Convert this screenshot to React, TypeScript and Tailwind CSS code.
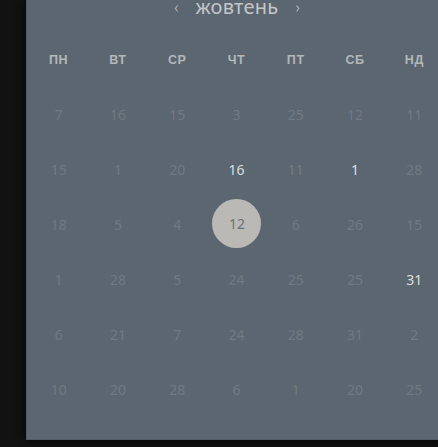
import React from "react";

const days = ["ПН", "ВТ", "СР", "ЧТ", "ПТ", "СБ", "НД"];

type Cell = { n: number; s?: "b" | "sel" };

const rows: Cell[][] = [
  [{ n: 7 }, { n: 16 }, { n: 15 }, { n: 3 }, { n: 25 }, { n: 12 }, { n: 11 }],
  [{ n: 15 }, { n: 1 }, { n: 20 }, { n: 16, s: "b" }, { n: 11 }, { n: 1, s: "b" }, { n: 28 }],
  [{ n: 18 }, { n: 5 }, { n: 4 }, { n: 12, s: "sel" }, { n: 6 }, { n: 26 }, { n: 15 }],
  [{ n: 1 }, { n: 28 }, { n: 5 }, { n: 24 }, { n: 25 }, { n: 25 }, { n: 31, s: "b" }],
  [{ n: 6 }, { n: 21 }, { n: 7 }, { n: 24 }, { n: 28 }, { n: 31 }, { n: 2 }],
  [{ n: 10 }, { n: 20 }, { n: 28 }, { n: 6 }, { n: 1 }, { n: 20 }, { n: 25 }],
];

export default function App() {
  return (
    <div
      className="w-[438px] h-[447px] bg-[#121212] overflow-hidden flex pl-[26px]"
      style={{ fontFamily: "'Noto Sans', 'Open Sans', sans-serif" }}
    >
      <div className="w-[418px] shrink-0 h-[440px] bg-[#5c6670] shadow-[0_0_10px_rgba(0,0,0,0.9)] border-l border-b border-[#535b63] flex flex-col pl-[2px]">
        <div className="h-[33px] flex justify-center items-start">
          <div className="flex items-center gap-[17px] mt-[-6px] ml-[1px] text-[#c3c6c9]">
            <span className="text-[16px] leading-[20px] font-light">‹</span>
            <span className="text-[20px] leading-[26px] tracking-[0.3px]">жовтень</span>
            <span className="text-[16px] leading-[20px] font-light">›</span>
          </div>
        </div>
        <div className="grid grid-cols-7 h-[54px] items-center">
          {days.map((d) => (
            <div
              key={d}
              className="text-center text-[12.5px] font-bold text-[#b3b7ba] tracking-[0.6px]"
              style={{ fontFamily: "'Liberation Sans', Arial, sans-serif" }}
            >
              {d}
            </div>
          ))}
        </div>
        {rows.map((r, i) => (
          <div key={i} className="grid grid-cols-7 h-[55px] items-center">
            {r.map((c, j) => (
              <div key={j} className="flex justify-center items-center">
                {c.s === "sel" ? (
                  <div className="w-[49px] h-[49px] rounded-full bg-[#bab9b6] flex items-center justify-center text-[14px] text-[#6b727a] ml-[1px] mt-[-2px]">
                    {c.n}
                  </div>
                ) : (
                  <span
                    className={
                      "text-[14px] " +
                      (c.s === "b" ? "text-[#dedede]" : "text-[#707a82]")
                    }
                  >
                    {c.n}
                  </span>
                )}
              </div>
            ))}
          </div>
        ))}
      </div>
    </div>
  );
}
